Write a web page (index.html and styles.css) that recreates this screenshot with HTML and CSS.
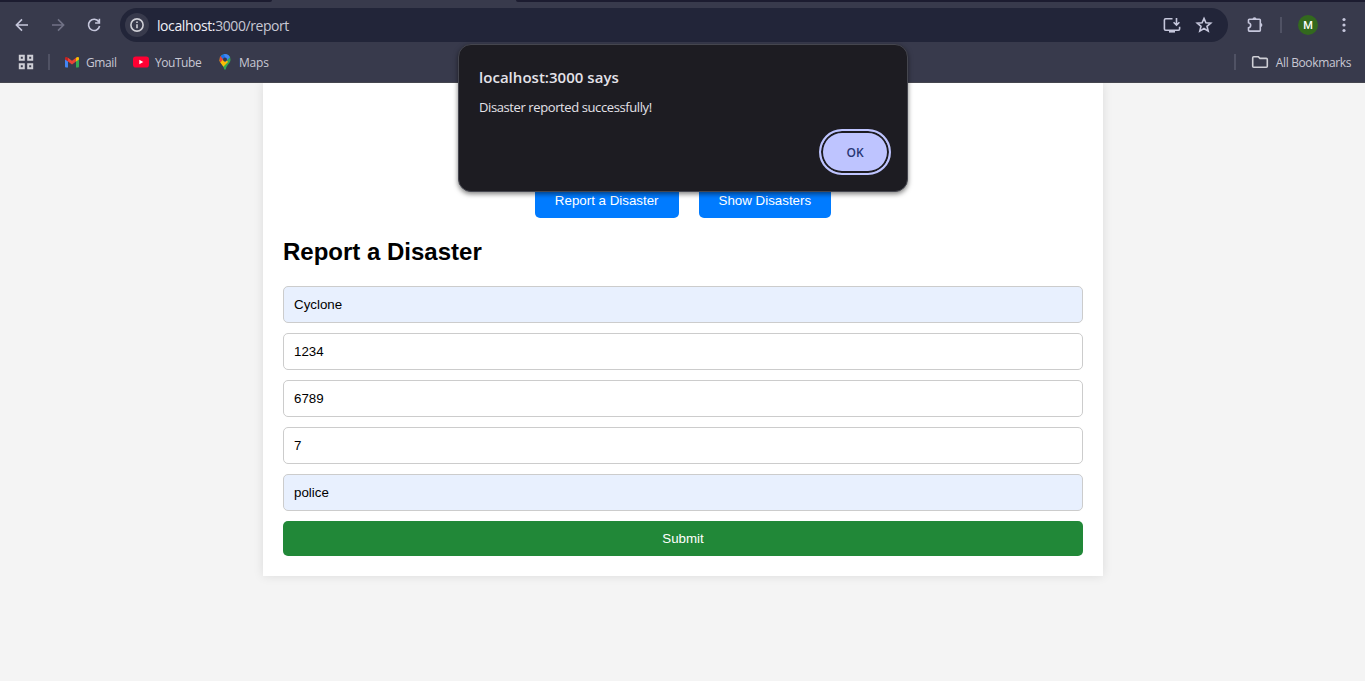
FILE: index.html
```html
<!DOCTYPE html>
<html lang="en">
<head>
<meta charset="utf-8">
<title>Report a Disaster</title>
<link rel="stylesheet" href="styles.css">
</head>
<body>
<header class="browser">
  <div class="tabstrip"><span class="tab-left"></span><span class="tab-right"></span></div>
  <div class="toolbar">
    <div class="nav-icons">
      <svg class="icon" width="20" height="20" viewBox="0 0 20 20"><path d="M16 10H4.6M10 4.4 4.4 10l5.6 5.6" /></svg>
      <svg class="icon icon-dim" width="20" height="20" viewBox="0 0 20 20"><path d="M4 10h11.4M10 4.4l5.6 5.6-5.6 5.6" /></svg>
      <svg class="icon" width="20" height="20" viewBox="0 0 20 20"><path d="M14.8 6.8A5.6 5.6 0 1 0 15.6 11M15.4 3.8V8h-4.3" /></svg>
    </div>
    <div class="omnibox">
      <span class="site-info"><svg class="icon icon-light" width="16" height="16" viewBox="0 0 16 16"><circle cx="8" cy="8" r="6.1"/><path d="M8 7.3v3.900M8 4.600v1.500"/></svg></span>
      <span class="url"><span class="url-host">localhost:</span>3000/report</span>
      <svg class="icon install" width="20" height="20" viewBox="0 0 20 20"><path d="M10.500 3.800H3.600a1.200 1.200 0 0 0-1.200 1.200v9a1.200 1.200 0 0 0 1.200 1.200h12.800a1.200 1.200 0 0 0 1.200-1.200v-2.300M14.500 3v7M11.600 7.300l2.900 2.900 2.900-2.900"/><path class="solid" d="M7 15h6v2.600H7z"/></svg>
      <svg class="icon star" width="18" height="18" viewBox="0 0 18 18"><path d="m9 2.400 1.900 4.400 4.800.400-3.700 3.100 1.200 4.800L9 12.500l-4.200 2.600L6 10.300 2.300 7.200l4.800-.400z"/></svg>
    </div>
    <svg class="icon puzzle" width="20" height="20" viewBox="0 0 20 20"><path d="M4.300 4.300h10.200c.5 0 .8.300.8.800v10.200c0 .5-.3.800-.8.800H4.300c-.5 0-.8-.3-.8-.8v-2.500c2.900-.6 2.900-4.500 0-5.100V5.100c0-.5.300-.8.800-.8z"/><path class="solid" d="M7.500 4.300a2 2 0 0 1 4 0zM15.300 8a2 2 0 0 1 0 4.200z"/></svg>
    <span class="divider bar-divider"></span>
    <span class="avatar">M</span>
    <svg class="kebab" width="4" height="16" viewBox="0 0 4 16"><circle cx="2" cy="2.500" r="1.600"/><circle cx="2" cy="8" r="1.600"/><circle cx="2" cy="13.500" r="1.600"/></svg>
  </div>
  <div class="bookmarks">
    <svg class="icon icon-light apps" width="16" height="16" viewBox="0 0 16 16"><path d="M1.800 1.800h4v4h-4zM10.200 1.800h4v4h-4zM1.800 10.200h4v4h-4zM10.200 10.200h4v4h-4z"/></svg>
    <span class="divider"></span>
    <span class="bookmark gmail"><svg width="14" height="12" viewBox="0 0 14 12"><path fill="#4285f4" d="M0 2h3v9.500H1a1 1 0 0 1-1-1z"/><path fill="#34a853" d="M11 2h3v8.500a1 1 0 0 1-1 1h-2z"/><path fill="#ea4335" d="M3 1.700 7 4.800l4-3.100v3.700L7 8.500 3 5.400z"/><path fill="#c5221f" d="M0 2.300C0 .8 1.600.5 3 1.700v3.700L0 3.500z"/><path fill="#fbbc04" d="M11 1.700c1.400-1.200 3-.9 3 .6v1.200l-3 1.900z"/></svg><span class="label gmail-label">Gmail</span></span>
    <span class="bookmark youtube"><svg width="16" height="12" viewBox="0 0 16 12"><rect y=".5" width="16" height="11" rx="2.800" fill="#ff0033"/><path fill="#fff" d="M6.300 3.700v4.600L10.300 6z"/></svg><span class="label youtube-label">YouTube</span></span>
    <span class="bookmark maps"><svg width="12" height="16" viewBox="0 0 12 16"><defs><clipPath id="pin"><path d="M6 0a5.500 5.500 0 0 1 5.500 5.500c0 4-3.700 5.100-4.700 9.500-.2 1-1.400 1-1.600 0C4.200 10.600.5 9.500.5 5.500A5.500 5.500 0 0 1 6 0z"/></clipPath></defs><g clip-path="url(#pin)"><path fill="#34a853" d="M0 0h12v16H0z"/><path fill="#fbbc04" d="M0 6 6 4l3 4-6 6-3-2z"/><path fill="#ea4335" d="M0 1.500 2 1l3 3.500L1 9H0z"/><path fill="#1a73e8" d="M1.500 2 4 0h4l3 3-5 5z"/><path fill="#4285f4" d="M5 0h4l2 3-4 4z"/></g><circle cx="6" cy="5.500" r="2" fill="#383a4c"/></svg><span class="label maps-label">Maps</span></span>
    <span class="divider right-divider"></span>
    <span class="bookmark all"><svg class="icon icon-light" width="18" height="16" viewBox="0 0 18 16"><path d="M3 2.700h4.300l1.600 1.700h6.400c.6 0 1 .4 1 1v6.900c0 .6-.4 1-1 1H2.700c-.6 0-1-.4-1-1V3.700c0-.6.4-1 1-1z"/></svg><span class="label all-label">All Bookmarks</span></span>
  </div>
</header>

<main class="viewport">
  <section class="card">
    <nav class="page-nav">
      <button class="nav-button">Report a Disaster</button>
      <button class="nav-button">Show Disasters</button>
    </nav>
    <h2 class="title">Report a Disaster</h2>
    <form class="form">
      <input class="field autofilled" value="Cyclone">
      <input class="field" value="1234">
      <input class="field" value="6789">
      <input class="field" value="7">
      <input class="field autofilled" value="police">
      <button class="submit" type="button">Submit</button>
    </form>
  </section>
</main>

<div class="dialog" role="alertdialog">
  <div class="dialog-title"><span>localhost:3000 says</span></div>
  <div class="dialog-message"><span>Disaster reported successfully!</span></div>
  <button class="dialog-ok">OK</button>
</div>
</body>
</html>
```

FILE: styles.css
```css
* { box-sizing: border-box; }
body {
  margin: 0;
  height: 681px;
  overflow: hidden;
  background: #f4f4f4;
  font-family: "Liberation Sans", Arial, sans-serif;
}
.browser {
  height: 83px;
  background: #383a4c;
  border-bottom: 1px solid #45464f;
  font-family: "Open Sans", "Noto Sans", sans-serif;
  color: #c8c8d4;
}
.tabstrip { height: 2px; display: flex; justify-content: space-between; }
.tab-left { width: 272px; background: #1c1c30; border-bottom-right-radius: 3px; }
.tab-right { width: 849px; background: #1c1c30; border-bottom-left-radius: 3px; }
.toolbar { height: 46px; display: flex; align-items: center; }
.icon { fill: none; stroke: #c6c7dc; stroke-width: 1.6; flex: none; display: block; }
.icon-dim { stroke: #717286; }
.icon-light { stroke: #cfcfd6; }
.apps { stroke-width: 2; }
.icon .solid { fill: #c6c7dc; stroke: none; }
.nav-icons { display: flex; gap: 16px; padding-left: 12px; }
.omnibox {
  width: 1108px;
  height: 34px;
  margin-left: 16px;
  padding: 0 15px 0 5px;
  border-radius: 17px;
  background: #222539;
  display: flex;
  align-items: center;
}
.site-info {
  width: 24px;
  height: 24px;
  border-radius: 50%;
  background: #383a4c;
  display: grid;
  place-items: center;
}
.url { margin-left: 8px; padding-top: 1px; font-size: 14px; letter-spacing: -0.42px; line-height: 20px; }
.url-host { color: #efeff6; }
.install { margin-left: auto; margin-right: 13px; }
.puzzle { margin-left: 17px; }
.divider { width: 2px; height: 16px; background: #505264; flex: none; }
.bar-divider { margin-left: 15px; }
.avatar {
  width: 20px;
  height: 20px;
  margin-left: 16px;
  border-radius: 50%;
  background: #33691e;
  color: #fff;
  font: 500 11px/21px Roboto, sans-serif;
  text-align: center;
}
.kebab { margin-left: 24px; fill: #c6c7dc; }
.bookmarks { height: 28px; display: flex; align-items: center; font-size: 12px; padding-left: 18px; }
.bookmarks .divider { margin-left: 14px; }
.bookmark { display: flex; align-items: center; line-height: 18px; white-space: nowrap; }
.label { padding-top: 1px; }
.gmail { margin-left: 15px; gap: 7px; width: 68px; }
.youtube { gap: 6px; width: 86px; }
.maps { gap: 8px; }
.gmail-label { letter-spacing: -0.4px; }
.youtube-label { letter-spacing: -0.45px; }
.maps-label { letter-spacing: -0.2px; }
.bookmarks .right-divider { margin-left: auto; margin-right: 15px; }
.all { gap: 7px; padding-right: 14px; }
.all-label { letter-spacing: -0.37px; }

.viewport { height: 598px; overflow: hidden; }
.card {
  width: 840px;
  height: 493px;
  margin: 0 auto 0 263px;
  padding: 100px 20px 20px;
  background: #fff;
  box-shadow: 0 0 10px rgba(0, 0, 0, .1);
}
.page-nav { display: flex; justify-content: center; gap: 20px; }
.nav-button, .submit {
  height: 35px;
  padding: 10px 20px;
  border: 0;
  border-radius: 5px;
  color: #fff;
  font: 13.3333px/15px "Liberation Sans", Arial, sans-serif;
}
.nav-button { background: #007bff; }
.title { margin: 20px 0; font-size: 24px; line-height: 28px; }
.form { display: grid; gap: 10px; }
.field {
  width: 100%;
  height: 37px;
  padding: 10px;
  border: 1px solid #ccc;
  border-radius: 5px;
  background: #fff;
  color: #000;
  font: 13.3333px "Liberation Sans", Arial, sans-serif;
}
.autofilled { background: #e8f0fe; }
.submit { background: #218838; }

.dialog {
  position: absolute;
  left: 458px;
  top: 44px;
  width: 450px;
  height: 148px;
  padding: 22px 16px 0 20px;
  border: 1px solid #45464f;
  border-radius: 13px;
  background: #1d1c22;
  box-shadow: 0 2px 5px rgba(0, 0, 0, .5);
  font-family: "Open Sans", "Noto Sans", sans-serif;
  display: flex;
  flex-direction: column;
}
.dialog-title { color: #e4e2e9; font-size: 15px; font-weight: 600; line-height: 20px; letter-spacing: 0.03px; }
.dialog-message { margin-top: 10px; color: #e4e2e9; font-size: 13px; line-height: 20px; letter-spacing: -0.4px; }
.dialog-ok {
  align-self: flex-end;
  width: 72px;
  height: 46px;
  margin-top: 12px;
  padding: 1px 0 0;
  border: 2px solid #bec4ff;
  border-radius: 23px;
  background: #bec4ff;
  box-shadow: inset 0 0 0 2px #1d1c22;
  color: #293674;
  font: 600 12px/18px "Open Sans", sans-serif;
}
```
